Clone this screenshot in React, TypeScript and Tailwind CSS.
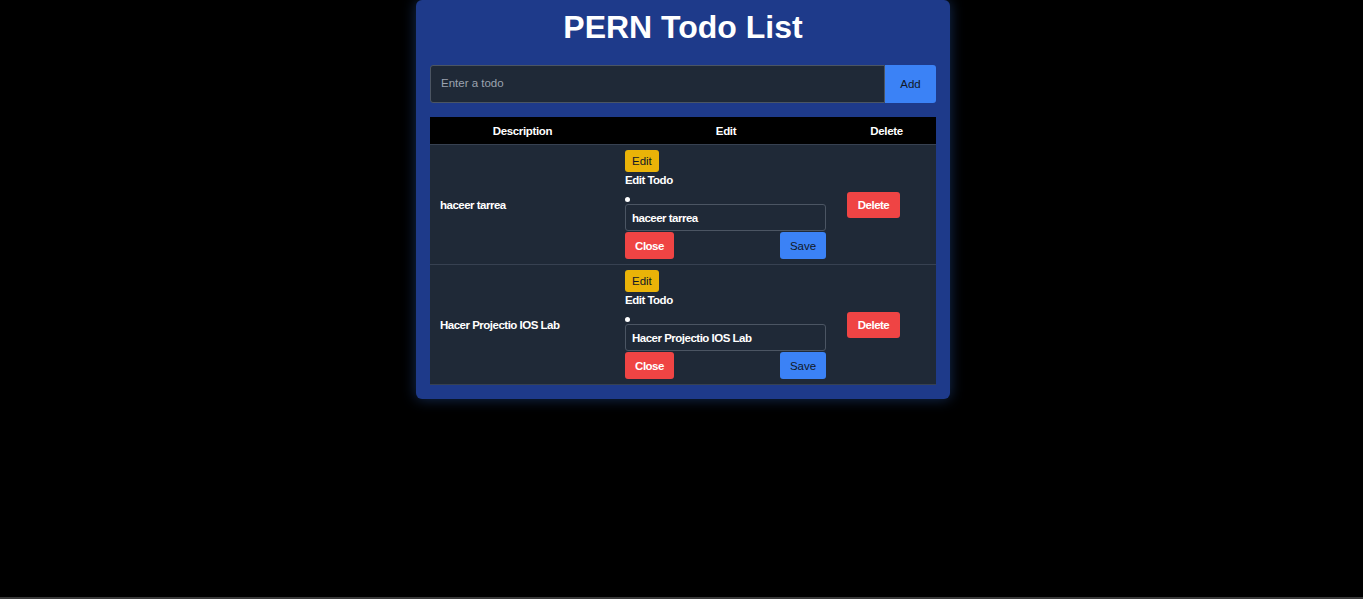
import { useState } from "react";

type Todo = { id: number; description: string };

const initialTodos: Todo[] = [
  { id: 1, description: "haceer tarrea" },
  { id: 2, description: "Hacer Projectio IOS Lab" },
];

function EditTodo({ todo }: { todo: Todo }) {
  const [description, setDescription] = useState(todo.description);
  return (
    <div className="flex flex-col items-start">
      <button className="h-[22px] px-[7px] pt-[2px] rounded-[3px] bg-[#eab308] text-[11.5px] text-[#111827]">
        Edit
      </button>
      <p className="mt-[1px] leading-[14px] text-[11.5px] font-bold tracking-[-0.5px] text-white">
        Edit Todo
      </p>
      <span className="mt-[10px] w-[5px] h-[5px] rounded-full bg-white" />
      <input
        className="mt-[2px] w-[201px] h-[27px] px-[6px] pt-[1px] rounded-[3px] border border-[#4b5563] bg-transparent text-[11.5px] font-bold tracking-[-0.5px] text-white outline-none"
        value={description}
        onChange={(e) => setDescription(e.target.value)}
      />
      <div className="mt-[1px] flex w-[201px] justify-between">
        <button className="h-[27px] w-[49px] pt-[3px] rounded-[3px] bg-[#ef4444] text-[11.5px] font-bold tracking-[-0.5px] text-white">
          Close
        </button>
        <button className="h-[27px] w-[46px] pt-[3px] rounded-[3px] bg-[#3b82f6] text-[11.5px] text-[#111827]">
          Save
        </button>
      </div>
    </div>
  );
}

export default function App() {
  const [todos, setTodos] = useState<Todo[]>(initialTodos);
  const [text, setText] = useState("");

  return (
    <div className="min-h-screen flex flex-col bg-black border-b-2 border-[#3a3a3a] font-['Liberation_Sans',Arial,sans-serif]">
      <div className="flex justify-center pl-[3px]">
        <div className="w-[534px] rounded-md bg-[#1e3a8a] px-[14px] pt-[9px] pb-[14px] shadow-[0_0_14px_rgba(59,130,246,0.35)]">
          <h1 className="text-center text-[32px] leading-[36px] font-bold text-white">PERN Todo List</h1>

          <div className="mt-[20px] flex h-[38px]">
            <input
              className="flex-1 rounded-l-[3px] border border-[#4b5563] bg-[#1f2937] px-[10px] text-[11.5px] text-white placeholder:text-[#9ca3af] outline-none"
              placeholder="Enter a todo"
              value={text}
              onChange={(e) => setText(e.target.value)}
            />
            <button className="w-[51px] pt-[2px] rounded-r-[3px] bg-[#3b82f6] text-[11.5px] text-[#111827]">Add</button>
          </div>

          <table className="mt-[14px] w-full table-fixed border-collapse">
            <colgroup>
              <col className="w-[185px]" />
              <col className="w-[222px]" />
              <col className="w-[99px]" />
            </colgroup>
            <thead>
              <tr className="h-[27px] bg-black border-b border-[#374151]">
                <th className="pt-[2px] text-[11.5px] font-bold tracking-[-0.35px] text-white">Description</th>
                <th className="pt-[2px] text-[11.5px] font-bold tracking-[-0.35px] text-white">Edit</th>
                <th className="pt-[2px] text-[11.5px] font-bold tracking-[-0.35px] text-white">Delete</th>
              </tr>
            </thead>
            <tbody>
              {todos.map((todo) => (
                <tr key={todo.id} className="bg-[#1f2937] border-b border-[#374151]">
                  <td className="px-[10px] pt-[4px] align-middle text-[11.5px] font-bold tracking-[-0.5px] text-white">
                    {todo.description}
                  </td>
                  <td className="px-[10px] pt-[5px] pb-[5px]">
                    <EditTodo todo={todo} />
                  </td>
                  <td className="px-[10px] pt-[1px] align-middle">
                    <button
                      className="h-[26px] w-[53px] pt-[2px] rounded-[3px] bg-[#ef4444] text-[11.5px] font-bold tracking-[-0.5px] text-white"
                      onClick={() => setTodos(todos.filter((t) => t.id !== todo.id))}
                    >
                      Delete
                    </button>
                  </td>
                </tr>
              ))}
            </tbody>
          </table>
        </div>
      </div>
    </div>
  );
}
